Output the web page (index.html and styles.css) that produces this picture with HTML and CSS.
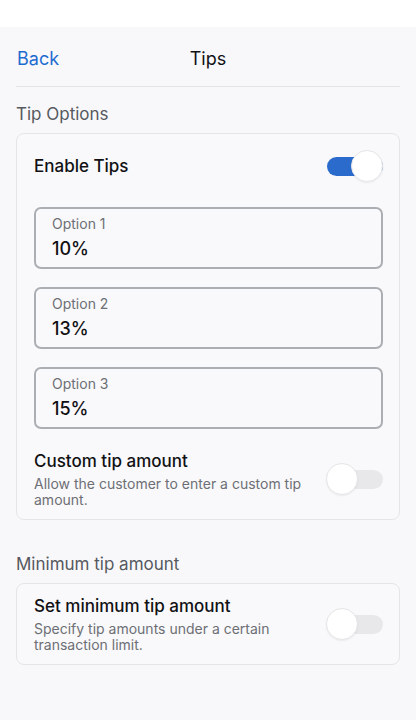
FILE: index.html
```html
<!DOCTYPE html>
<html lang="en">
<head>
<meta charset="utf-8">
<title>Tips</title>
<link rel="stylesheet" href="styles.css">
</head>
<body>
<div class="statusbar"></div>
<header class="nav">
  <a class="nav-back">Back</a>
  <h1 class="nav-title">Tips</h1>
  <span></span>
</header>

<h2 class="section-title">Tip Options</h2>
<section class="card">
  <div class="row row-main">
    <span class="row-title">Enable Tips</span>
    <span class="toggle on"><span class="knob"></span></span>
  </div>
  <div class="options">
    <div class="field">
      <span class="field-label">Option 1</span>
      <span class="field-value">10%</span>
    </div>
    <div class="field">
      <span class="field-label">Option 2</span>
      <span class="field-value">13%</span>
    </div>
    <div class="field">
      <span class="field-label">Option 3</span>
      <span class="field-value">15%</span>
    </div>
  </div>
  <div class="row row-desc row-custom">
    <div class="row-text">
      <span class="row-title">Custom tip amount</span>
      <span class="row-sub">Allow the customer to enter a custom tip amount.</span>
    </div>
    <span class="toggle"><span class="knob"></span></span>
  </div>
</section>

<h2 class="section-title section-title-2">Minimum tip amount</h2>
<section class="card">
  <div class="row row-desc">
    <div class="row-text">
      <span class="row-title">Set minimum tip amount</span>
      <span class="row-sub">Specify tip amounts under a certain transaction limit.</span>
    </div>
    <span class="toggle"><span class="knob"></span></span>
  </div>
</section>
</body>
</html>
```

FILE: styles.css
```css
* { box-sizing: border-box; }
html, body {
  margin: 0;
  padding: 0;
}
body {
  background: #f8f8fa;
  font-family: Inter, "Noto Sans", "Liberation Sans", sans-serif;
  color: #111114;
  width: 416px;
  min-height: 720px;
}
.statusbar {
  height: 27px;
  background: #ffffff;
}
.nav {
  margin: 0 16px;
  height: 60px;
  padding-top: 3px;
  border-bottom: 1px solid #e4e4e7;
  display: grid;
  grid-template-columns: 1fr auto 1fr;
  align-items: center;
}
.nav-back {
  color: #1e6bd0;
  font-size: 18px;
  padding-left: 1px;
}
.nav-title {
  margin: 0;
  font-size: 18px;
  font-weight: 400;
  color: #111114;
}
.section-title {
  margin: 0;
  padding: 16px 16px 8px;
  font-size: 17px;
  line-height: 22px;
  font-weight: 400;
  color: #56595f;
}
.section-title-2 {
  padding-top: 33px;
}
.card {
  margin: 0 16px;
  border: 1px solid #e5e5e8;
  border-radius: 8px;
  background: #f9f9fb;
  padding: 0 16px 0 17px;
}
.row {
  display: flex;
  align-items: center;
  justify-content: space-between;
  gap: 24px;
}
.row-main {
  height: 64px;
}
.row-title {
  font-size: 17px;
  line-height: 22px;
  font-weight: 500;
  color: #111114;
}
.row-desc {
  padding: 11px 0 11px;
}
.row-custom {
  margin-top: 10px;
}
.row-text {
  display: flex;
  flex-direction: column;
  gap: 4px;
  flex: 1;
}
.row-sub {
  font-size: 14px;
  line-height: 16px;
  color: #6d6f75;
}
.options {
  margin-top: 9px;
  display: flex;
  flex-direction: column;
  gap: 18px;
}
.field {
  height: 62px;
  border: 2px solid #abaeb3;
  border-radius: 7px;
  padding: 6px 16px 0;
  display: flex;
  flex-direction: column;
  gap: 5px;
}
.field-label {
  font-size: 14px;
  line-height: 18px;
  color: #6d6f75;
}
.field-value {
  font-size: 18px;
  line-height: 22px;
  font-weight: 500;
  color: #111114;
}
.toggle {
  position: relative;
  flex: 0 0 56px;
  width: 56px;
  height: 19px;
  border-radius: 10px;
  background: #e8e8eb;
}
.toggle.on {
  background: #2b6bcc;
}
.knob {
  position: absolute;
  top: 50%;
  left: -1px;
  width: 32px;
  height: 32px;
  margin-top: -16px;
  border-radius: 50%;
  background: #ffffff;
  border: 1px solid #e6e6e8;
  box-shadow: 0 1px 2px rgba(0, 0, 0, 0.06);
}
.toggle.on .knob {
  left: auto;
  right: 0;
}
```
